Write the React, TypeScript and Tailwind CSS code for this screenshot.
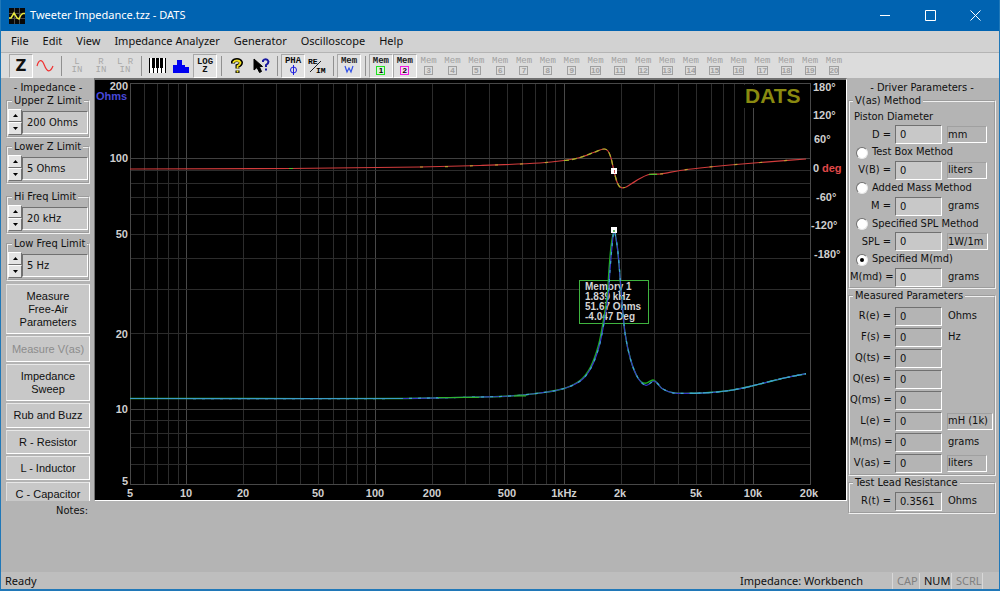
import React from "react";

const tahoma = "font-['DejaVu_Sans_Condensed','DejaVu_Sans',sans-serif]";

const X0 = 130;
const PX_PER_DECADE_X = 188.8;
const PX_PER_DECADE_Y = 250.3;
const fx = (f: number) => X0 + Math.log10(f / 5) * PX_PER_DECADE_X;
const zy = (z: number) => 484.5 - Math.log10(z / 5) * PX_PER_DECADE_Y;

const freqs = [
  6, 7, 8, 9, 10, 20, 30, 40, 50, 60, 70, 80, 90, 100, 200, 300, 400, 500, 600, 700, 800, 900,
  1000, 2000, 3000, 4000, 5000, 6000, 7000, 8000, 9000, 10000,
];
const ohms = [6, 7, 8, 9, 10, 20, 30, 40, 50, 60, 70, 80, 90, 100];
const majors = [10, 100, 1000, 10000];

function smooth(p: number[][]) {
  let d = `M${p[0][0]} ${p[0][1]}`;
  for (let i = 0; i < p.length - 1; i++) {
    const a = p[Math.max(i - 1, 0)];
    const b = p[i];
    const c = p[i + 1];
    const e = p[Math.min(i + 2, p.length - 1)];
    const w = c[0] - b[0];
    const s1 = i === 0 ? 0 : (c[1] - a[1]) / (c[0] - a[0]);
    const s2 = (e[1] - b[1]) / (e[0] - b[0]);
    d += ` C${b[0] + w / 3} ${b[1] + (s1 * w) / 3} ${c[0] - w / 3} ${c[1] - (s2 * w) / 3} ${c[0]} ${c[1]}`;
  }
  return d;
}

const phasePoints = [
  [130, 169], [290, 168.5], [420, 167], [480, 165.5], [540, 163], [564, 160.5], [580, 157.5],
  [595, 152], [604, 149], [608, 151], [611, 158], [614, 171], [617, 182], [620, 187], [625, 187.5],
  [631, 184], [640, 178.5], [648, 174.8], [654, 174], [660, 174], [680, 170.5], [700, 168],
  [730, 165], [760, 162.5], [806, 159],
];
const phase = smooth(phasePoints);
const phasePeak = smooth(phasePoints.filter(([x]) => x >= 564 && x <= 625));
const phaseTails = [
  smooth(phasePoints.filter(([x]) => x >= 420 && x <= 564)),
  smooth(phasePoints.filter(([x]) => x >= 660)),
];

const leftSide = [
  [130, 398.5], [400, 398.5], [440, 397.8], [480, 397], [510, 396], [540, 393], [564, 388.5],
  [580, 380.5], [590, 368], [598, 347], [603, 323], [607.5, 293], [609, 270], [611, 247], [614, 231],
  [617.3, 247], [619.5, 270], [621.8, 300], [625, 333], [630.7, 360], [638, 378],
];
const rightSide = [
  [662, 388.5], [673, 392.8], [690, 393.3], [713, 392.3], [733, 390], [753, 385.7], [780, 379],
  [806, 373.7],
];
const memory = smooth([...leftSide, [645, 383.3], [653, 380], [657, 383], ...rightSide]);
const live = smooth([
  ...leftSide.map(([x, y]) => [x + (x > 570 && x < 612 ? 1 : 0), y]),
  [646, 385.3], [654, 381], [658, 384], ...rightSide,
]);
const liveTail = smooth(rightSide.filter(([x]) => x >= 690));

function Chart() {
  const label = "fill-[#cfcfcf]";
  return (
    <svg
      viewBox="95 80 751 420"
      className="block h-full w-full bg-black font-['Liberation_Sans',Arial,sans-serif] text-[11px] font-bold"
      role="img"
      aria-label="Impedance and phase versus frequency"
    >
      <g shapeRendering="crispEdges" strokeWidth="1">
        {freqs.map((f) => (
          <path key={f} d={`M${Math.floor(fx(f)) + 0.5} 83V485`} stroke={majors.includes(f) ? "#484848" : "#2c2c2c"} />
        ))}
        {ohms.map((z) => (
          <path key={z} d={`M130 ${Math.floor(zy(z)) + 0.5}H811`} stroke={majors.includes(z) ? "#404040" : "#2c2c2c"} />
        ))}
        <rect x="130.5" y="83.5" width="680" height="401" fill="none" stroke="#484848" />
      </g>
      <rect x="743" y="85" width="61" height="23" fill="#000" />
      <text x="745" y="103" className="fill-[#8a8a10] text-[21px]">DATS</text>

      <g className={label} textAnchor="end">
        <text x="128" y="90">200</text>
        <text x="128" y="162">100</text>
        <text x="128" y="238">50</text>
        <text x="128" y="338">20</text>
        <text x="128" y="413">10</text>
        <text x="128" y="485">5</text>
      </g>
      <text x="96" y="100" className="fill-[#4848d8]">Ohms</text>
      <g className={label} textAnchor="middle">
        <text x="130" y="497">5</text>
        <text x="186" y="497">10</text>
        <text x="243" y="497">20</text>
        <text x="318" y="497">50</text>
        <text x="375" y="497">100</text>
        <text x="432" y="497">200</text>
        <text x="507" y="497">500</text>
        <text x="564" y="497">1kHz</text>
        <text x="620" y="497">2k</text>
        <text x="696" y="497">5k</text>
        <text x="753" y="497">10k</text>
        <text x="809" y="497">20k</text>
      </g>
      <g className={label}>
        <text x="813" y="91">180°</text>
        <text x="813" y="119">120°</text>
        <text x="814" y="143">60°</text>
        <text x="813" y="172">0</text>
        <text x="816" y="201">-60°</text>
        <text x="811" y="229">-120°</text>
        <text x="814" y="258">-180°</text>
      </g>
      <text x="822" y="172" className="fill-[#e04848]">deg</text>

      <rect x="579.5" y="280.5" width="69" height="43" fill="#000" stroke="#3fb43f" />
      <g className="fill-[#d4d4d4] text-[10px]">
        <text x="585" y="290">Memory 1</text>
        <text x="585" y="300">1.839 kHz</text>
        <text x="585" y="310">51.67 Ohms</text>
        <text x="585" y="320">-4.047 Deg</text>
      </g>

      <g fill="none" strokeWidth="1.2">
        <path d={phase} stroke="#d23c3c" />
        <path d={phasePeak} stroke="#a0b828" strokeDasharray="5 3" />
        {phaseTails.map((d) => (
          <path key={d} d={d} stroke="#b8a030" strokeDasharray="3 22" />
        ))}
        <path d="M289 168.500H293M649 174.300H657" stroke="#50c030" />
        <path d={memory} stroke="#20b020" strokeWidth="1.4" />
        <path d={live} stroke="#3838c8" />
        <path d={live} stroke="#3ca8c8" strokeDasharray="3 6" />
        <path d={liveTail} stroke="#3ca8c8" strokeDasharray="10 3" />
        <path d="M130 398.500H403" stroke="#3c9cc8" />
        <path d="M438 397.500H479M514 395.800H526" stroke="#30b430" />
      </g>
      <g fill="#fff">
        <rect x="611" y="168" width="6" height="6" />
        <rect x="611" y="227" width="6" height="6" />
      </g>
      <rect x="614" y="170" width="1" height="3" fill="#c85050" />
      <rect x="613" y="230" width="2" height="2" fill="#60b060" />
    </svg>
  );
}

function Tool({ label, on, children, off, grow }: { label: string; on?: boolean; off?: boolean; grow?: boolean; children: React.ReactNode }) {
  return (
    <button
      type="button"
      aria-label={label}
      disabled={off}
      className={`flex h-6 flex-col items-center justify-center border ${grow ? "min-w-0 flex-1" : "w-6 shrink-0"} ${
        on ? "border-t-[#a8a8a8] border-r-white border-b-white border-l-[#a8a8a8] bg-[#e2e2e2]" : "border-transparent"
      }`}
    >
      {children}
    </button>
  );
}

const Sep = () => (
  <div className="flex w-2 shrink-0 justify-center">
    <div className="h-5 w-px bg-[#909090]" />
  </div>
);

const tiny = "font-['Liberation_Mono',monospace] text-[9px] leading-[8px]";

function Mem({ n }: { n: number }) {
  const on = n < 3;
  const box =
    n === 1
      ? "border-[#20e020] bg-[#d8f4d8] text-black"
      : n === 2
        ? "border-[#f020e0] bg-[#f4d8f4] text-black"
        : "border-[#a0a0a0] text-[#a0a0a0]";
  return (
    <Tool label={`Memory ${n}`} on={on} off={!on} grow>
      <span className={`${tiny} ${on ? "font-bold text-[#202020]" : "text-[#a0a0a0]"}`}>Mem</span>
      <span
        className={`mt-px flex h-[9px] min-w-[9px] items-center justify-center border font-['Liberation_Sans',sans-serif] text-[8px] leading-[7px] font-bold ${box}`}
      >
        {n}
      </span>
    </Tool>
  );
}

function Toolbar() {
  return (
    <div className="flex h-[26px] items-center overflow-hidden border-t border-[#b4b4b4] bg-[#dcdcdc] pl-2" role="toolbar">
      <Tool label="Impedance" on>
        <span className="font-['DejaVu_Sans',sans-serif] text-[15px] leading-4 font-bold">Z</span>
      </Tool>
      <Tool label="Generator">
        <svg width="18" height="14" viewBox="0 0 18 14" fill="none" stroke="#f03030" strokeWidth="1.2">
          <path d="M1 7C3 0 6 0 8.500 6.500S14 14 17 7" />
        </svg>
      </Tool>
      <Sep />
      {["L", "R", "L R"].map((c) => (
        <Tool key={c} label={`${c} input`} off>
          <span className={`${tiny} whitespace-nowrap text-[#a8a8a8]`}>{c}</span>
          <span className={`${tiny} text-[#a8a8a8]`}>IN</span>
        </Tool>
      ))}
      <Sep />
      <Tool label="Keyboard">
        <svg width="17" height="15" viewBox="0 0 17 15" shapeRendering="crispEdges">
          <rect width="17" height="15" fill="#fff" />
          <path d="M0 0h1v15h-1zM4 9h1v6h-1zM8 9h1v6h-1zM12 9h1v6h-1zM16 0h1v15h-1zM3 0h3v10h-3zM7 0h3v10h-3zM11 0h3v10h-3z" fill="#000" />
        </svg>
      </Tool>
      <Tool label="Histogram">
        <svg width="17" height="14" viewBox="0 0 17 14">
          <path d="M0 14V6h4V1h5v5h3v2h4v6z" fill="#0000f0" />
        </svg>
      </Tool>
      <Tool label="Log Z" on>
        <span className={`${tiny} font-bold`}>LOG</span>
        <span className={`${tiny} font-bold`}>Z</span>
      </Tool>
      <Sep />
      <Tool label="Help">
        <svg width="14" height="16" viewBox="0 0 14 16" fill="none">
          <path d="M3 5.500V4Q4 2 7 2T11 4.500Q11 7 7.500 8V10.500M7.500 12.500V15" stroke="#000" strokeWidth="4" />
          <path d="M3.500 5V4Q4.500 2.500 7 2.500T10.500 4.500Q10.500 6.500 7.500 8V10.500M7.500 12.500V14.500" stroke="#f0e020" strokeWidth="1.8" />
        </svg>
      </Tool>
      <Tool label="Context help">
        <svg width="17" height="16" viewBox="0 0 17 16" fill="none">
          <path d="M1 1V12L4 9.500L6.500 14.500L8.500 13.500L6.300 8.500H9.500z" fill="#000" stroke="#000" />
          <path d="M10 4V2.500Q11 1.200 12.800 1.200T15.500 3.500Q15.500 5.500 13 7V9M13 10.500V12.500" stroke="#1818a0" strokeWidth="2" />
        </svg>
      </Tool>
      <Sep />
      <Tool label="Phase" on>
        <span className={`${tiny} font-bold`}>PHA</span>
        <svg width="9" height="10" viewBox="0 0 9 10" fill="none" stroke="#2020e0">
          <circle cx="4.500" cy="5" r="3" />
          <path d="M4.500 0V10" />
        </svg>
      </Tool>
      <Tool label="Real / Imaginary">
        <svg width="20" height="18" viewBox="0 0 20 18" className="font-['Liberation_Mono',monospace] text-[8px] font-bold">
          <text x="1" y="7">RE</text>
          <text x="9" y="16">IM</text>
          <path d="M3 15L14 4" stroke="#202020" />
        </svg>
      </Tool>
      <Sep />
      <Tool label="Memory write" on>
        <span className={`${tiny} font-bold text-[#202020]`}>Mem</span>
        <svg width="10" height="9" viewBox="0 0 10 9" fill="none" stroke="#3050e8" strokeWidth="1.200">
          <path d="M1 1L3 7L5 3L7 7L9 1" />
        </svg>
      </Tool>
      <Sep />
      <div className="flex w-[477px] shrink-0">
        {Array.from({ length: 20 }, (_, i) => (
          <Mem key={i} n={i + 1} />
        ))}
      </div>
    </div>
  );
}

const groove = "min-w-0 border-2 border-[#f0f0f0] [border-style:groove]";
const sunken = "border border-t-[#707070] border-r-white border-b-white border-l-[#707070]";

function Limit({ name, value, space }: { name: string; value: string; space: string }) {
  return (
    <fieldset className={`${groove} ${space} h-11 shrink-0`}>
      <legend className="ml-1 px-0.5 leading-[14px] whitespace-nowrap">{name}</legend>
      <div className="flex items-center pt-px">
        <div className="flex shrink-0 flex-col">
          <button type="button" aria-label={`${name} up`} className="flex h-[13px] w-[14px] items-center justify-center border border-t-white border-r-[#707070] border-b-[#707070] border-l-white bg-[#e4e4e4]">
            <svg width="5" height="3" viewBox="0 0 5 3"><path d="M0 3L2.500 0L5 3z" /></svg>
          </button>
          <button type="button" aria-label={`${name} down`} className="flex h-[13px] w-[14px] items-center justify-center border border-t-white border-r-[#707070] border-b-[#707070] border-l-white bg-[#e4e4e4]">
            <svg width="5" height="3" viewBox="0 0 5 3"><path d="M0 0L2.500 3L5 0z" /></svg>
          </button>
        </div>
        <input aria-label={name} defaultValue={value} className={`${sunken} h-[23px] min-w-0 flex-1 bg-[#c8c8c8] pl-1`} />
      </div>
    </fieldset>
  );
}

const sideButtons: [string[], string][] = [
  [["Measure", "Free-Air", "Parameters"], "h-[50px]"],
  [["Measure V(as)"], "h-[26px]"],
  [["Impedance", "Sweep"], "h-[37px]"],
  [["Rub and Buzz"], "h-[25px]"],
  [["R - Resistor"], "h-[24px]"],
  [["L - Inductor"], "h-[24px]"],
  [["C - Capacitor"], "h-[24px]"],
];

function Row({ id, name, value, unit, boxed, light }: { id: string; name: string; value: string; unit?: string; boxed?: boolean; light?: boolean }) {
  return (
    <div className="flex h-[19px] items-center">
      <label htmlFor={id} className="w-[41px] shrink-0 text-right whitespace-nowrap">{name} =</label>
      <input id={id} defaultValue={value} className={`${sunken} ml-1 h-[19px] w-[47px] shrink-0 pl-1 ${light ? "bg-[#c8c8c8]" : "bg-[#b4b4b4]"}`} />
      {unit && (
        <span
          className={`ml-[5px] flex h-[17px] items-center border whitespace-nowrap ${
            boxed ? "min-w-10 border-t-[#a0a0a0] border-r-white border-b-white border-l-[#a0a0a0] pr-1" : "border-transparent"
          }`}
        >
          {unit}
        </span>
      )}
    </div>
  );
}

function Method({ name, checked }: { name: string; checked?: boolean }) {
  return (
    <label className="flex h-4 items-center gap-1 pl-1.5 whitespace-nowrap">
      <input
        type="radio"
        name="method"
        defaultChecked={checked}
        className="flex h-3 w-3 shrink-0 appearance-none items-center justify-center rounded-full border border-t-[#707070] border-r-[#e8e8e8] border-b-[#e8e8e8] border-l-[#707070] bg-white checked:before:h-1 checked:before:w-1 checked:before:rounded-full checked:before:bg-black checked:before:content-['']"
      />
      {name}
    </label>
  );
}

export default function App() {
  return (
    <div className={`flex min-h-screen flex-col border-x border-b-2 border-[#2078b8] bg-[#b4b4b4] text-[11px] text-[#101010] ${tahoma}`}>
      <header className="flex h-[31px] shrink-0 items-center bg-[#0063b1] pl-2 font-['Noto_Sans',sans-serif] text-[11px] text-white">
        <svg width="16" height="16" viewBox="0 0 16 16" fill="none">
          <rect width="16" height="16" fill="#080808" />
          <path d="M5.500 0V16M10.500 0V16M0 5.500H16M0 10.500H16" stroke="#484848" />
          <path d="M0 10H2L5 5L8 10L10 11L12 7L14 5.500H16" stroke="#e8e840" strokeWidth="1.500" />
        </svg>
        <h1 className="ml-[5px] flex-1">Tweeter Impedance.tzz - DATS</h1>
        <button type="button" aria-label="Minimize" className="flex h-full w-[45px] items-center justify-center">
          <svg width="11" height="11" stroke="#fff"><path d="M0 5.500H10" /></svg>
        </button>
        <button type="button" aria-label="Maximize" className="flex h-full w-[45px] items-center justify-center">
          <svg width="11" height="11" stroke="#fff" fill="none"><path d="M.5 .5H10.500V10.500H.5z" /></svg>
        </button>
        <button type="button" aria-label="Close" className="mr-px flex h-full w-[45px] items-center justify-center">
          <svg width="11" height="11" stroke="#fff"><path d="M.5 .5L10.500 10.500M10.500 .5L.5 10.500" /></svg>
        </button>
      </header>

      <nav className="flex h-[21px] shrink-0 items-center gap-[14px] bg-[#d2d2d2] pl-[10px] font-['Noto_Sans',sans-serif] text-[11px]">
        {["File", "Edit", "View", "Impedance Analyzer", "Generator", "Oscilloscope", "Help"].map((m) => (
          <button key={m} type="button">{m}</button>
        ))}
      </nav>

      <Toolbar />

      <main className="flex flex-1">
        <div className="flex min-w-0 flex-1 flex-col">
          <div className="flex h-[423px]">
            <aside className="flex w-[93px] shrink-0 flex-col overflow-hidden pr-1 pl-[5px]">
              <h2 className="mt-1 h-3 shrink-0 text-center leading-3 whitespace-nowrap">- Impedance -</h2>
              <Limit name="Upper Z Limit" value="200 Ohms" space="" />
              <Limit name="Lower Z Limit" value="5 Ohms" space="mt-0.5" />
              <Limit name="Hi Freq Limit" value="20 kHz" space="mt-1.5" />
              <Limit name="Low Freq Limit" value="5 Hz" space="mt-[3px]" />
              <div className="mt-[3px] flex flex-col gap-0.5 font-['Liberation_Sans',Arial,sans-serif] leading-[13px]">
                {sideButtons.map(([lines, height]) => (
                  <button
                    key={lines[0] + lines.length}
                    type="button"
                    disabled={lines[0] === "Measure V(as)"}
                    className={`${height} flex shrink-0 flex-col items-center justify-center border border-t-[#e8e8e8] border-r-white border-b-white border-l-[#e0e0e0] bg-[#c8c8c8] disabled:text-[#8c8c8c]`}
                  >
                    {lines.map((l) => (
                      <span key={l}>{l}</span>
                    ))}
                  </button>
                ))}
              </div>
            </aside>
            <section className="min-w-0 flex-1 border border-t-2 border-t-[#707070] border-r-white border-b-white border-l-[#707070]">
              <Chart />
            </section>
          </div>
          <div className="flex flex-1 pt-0.5">
            <label htmlFor="notes" className="w-[89px] pr-0.5 text-right leading-4">Notes:</label>
            <textarea id="notes" className="flex-1 resize-none bg-transparent outline-none" />
          </div>
        </div>

        <aside className="w-[152px] shrink-0 pr-[3px] pl-px">
          <h2 className="mt-1 h-3 text-center leading-3">- Driver Parameters -</h2>
          <fieldset className={`${groove} h-[195px]`}>
            <legend className="ml-[3px] px-0.5 leading-[14px]">V(as) Method</legend>
            <div className="flex h-[179px] flex-col justify-between pt-px">
              <div className="flex h-4 items-center pl-1">Piston Diameter</div>
              <Row id="d" name="D" value="0" unit="mm" boxed light />
              <Method name="Test Box Method" />
              <Row id="vb" name="V(B)" value="0" unit="liters" boxed light />
              <Method name="Added Mass Method" />
              <Row id="m" name="M" value="0" unit="grams" light />
              <Method name="Specified SPL Method" />
              <Row id="spl" name="SPL" value="0" unit="1W/1m" boxed light />
              <Method name="Specified M(md)" checked />
              <Row id="mmd" name="M(md)" value="0" unit="grams" light />
            </div>
          </fieldset>
          <fieldset className={`${groove} h-[187px]`}>
            <legend className="ml-[3px] px-0.5 leading-[14px]">Measured Parameters</legend>
            <div className="flex flex-col gap-0.5 pt-1">
              <Row id="re" name="R(e)" value="0" unit="Ohms" />
              <Row id="fs" name="F(s)" value="0" unit="Hz" />
              <Row id="qts" name="Q(ts)" value="0" />
              <Row id="qes" name="Q(es)" value="0" />
              <Row id="qms" name="Q(ms)" value="0" />
              <Row id="le" name="L(e)" value="0" unit="mH (1k)" boxed />
              <Row id="mms" name="M(ms)" value="0" unit="grams" />
              <Row id="vas" name="V(as)" value="0" unit="liters" boxed />
            </div>
          </fieldset>
          <fieldset className={`${groove} h-[38px]`}>
            <legend className="ml-[3px] px-0.5 leading-[14px]">Test Lead Resistance</legend>
            <div className="pt-0.5">
              <Row id="rt" name="R(t)" value="0.3561" unit="Ohms" />
            </div>
          </fieldset>
        </aside>
      </main>

      <footer className="flex h-[17px] shrink-0 items-center bg-[#bebebe] pr-4 pl-1 font-['Noto_Sans',sans-serif] text-[11px] leading-4">
        <span className="flex-1">Ready</span>
        <span className="w-[152px]">Impedance: Workbench</span>
        <span className="w-[27px] border-l border-[#d8d8d8] pl-1 text-[#808080]">CAP</span>
        <span className="w-8 border-l border-[#d8d8d8] pl-1">NUM</span>
        <span className="w-8 border-x border-[#d8d8d8] pl-1 text-[#808080]">SCRL</span>
      </footer>
    </div>
  );
}
